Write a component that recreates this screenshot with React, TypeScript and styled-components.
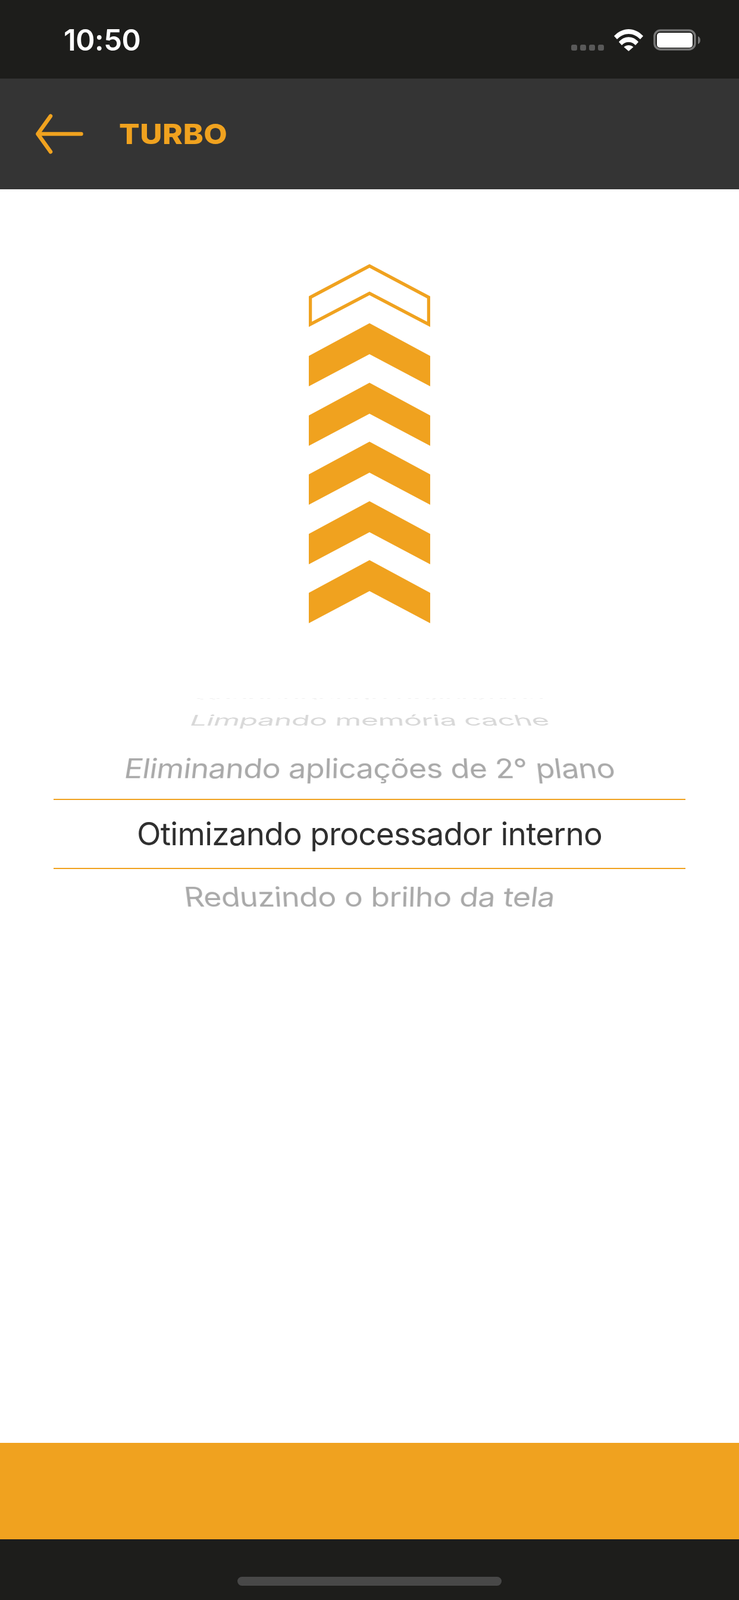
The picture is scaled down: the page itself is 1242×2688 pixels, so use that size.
import React from "react";
import styled, { createGlobalStyle } from "styled-components";

const ORANGE = "#f0a21f";

const Global = createGlobalStyle`
  html, body { margin: 0; padding: 0; background: #fff; }
  #root { width: 1242px; height: 2688px; }
`;

const Screen = styled.div`
  width: 1242px;
  height: 2688px;
  display: flex;
  flex-direction: column;
  overflow: hidden;
  background: #fff;
`;

const StatusBar = styled.div`
  height: 132px;
  flex: none;
  background: #1d1d1b;
  display: flex;
  align-items: flex-start;
  justify-content: space-between;
  box-sizing: border-box;
  padding: 0 62px 0 107px;
`;

const Clock = styled.div`
  font-family: Inter, "Liberation Sans", sans-serif;
  font-weight: 600;
  font-size: 49px;
  line-height: 57px;
  margin-top: 39px;
  color: #fff;
  letter-spacing: -0.5px;
`;

const StatusIcons = styled.svg`
  width: 220px;
  height: 40px;
  margin-top: 48px;
  display: block;
`;

const NavBar = styled.div`
  height: 186px;
  flex: none;
  background: #343434;
  display: flex;
  align-items: center;
  box-sizing: border-box;
  padding-left: 60px;
  gap: 60px;
`;

const BackIcon = styled.svg`
  width: 80px;
  height: 68px;
  display: block;
  flex: none;
`;

const Title = styled.div`
  font-family: Inter, "Liberation Sans", sans-serif;
  font-weight: 800;
  font-size: 46px;
  line-height: 56px;
  color: ${ORANGE};
  letter-spacing: 0.5px;
  transform: scaleX(1.115);
  transform-origin: left center;
`;

const Body = styled.div`
  flex: 1;
  display: flex;
  flex-direction: column;
  align-items: center;
`;

const Chevrons = styled.svg`
  width: 204px;
  height: 603px;
  margin-top: 126px;
  display: block;
  flex: none;
`;

const Picker = styled.div`
  width: 1062px;
  height: 386px;
  margin-top: 121px;
  display: flex;
  flex-direction: column;
  align-items: center;
  perspective: 1200px;
  perspective-origin: 50% 233px;
  overflow: hidden;
  flex: none;
`;

const Row = styled.div<{ $h: number; $angle: number; $color: string; $scale: number }>`
  width: 100%;
  height: ${(p) => p.$h}px;
  flex: none;
  display: flex;
  align-items: center;
  justify-content: center;
  font-family: Inter, "Liberation Sans", sans-serif;
  font-size: 53px;
  letter-spacing: -0.75px;
  white-space: nowrap;
  color: ${(p) => p.$color};
  transform: rotateX(${(p) => p.$angle}deg) scale(${(p) => p.$scale});
`;

const Selected = styled.div`
  width: 100%;
  height: 118px;
  flex: none;
  box-sizing: border-box;
  border-top: 2px solid ${ORANGE};
  border-bottom: 2px solid ${ORANGE};
  display: flex;
  align-items: center;
  justify-content: center;
  font-family: Inter, "Liberation Sans", sans-serif;
  font-size: 53px;
  letter-spacing: -0.75px;
  white-space: nowrap;
  color: #2f2f2f;
`;

const OrangeBar = styled.div`
  height: 162px;
  flex: none;
  background: ${ORANGE};
`;

const HomeArea = styled.div`
  height: 102px;
  flex: none;
  background: #1d1d1b;
  display: flex;
  justify-content: center;
  box-sizing: border-box;
  padding-top: 63px;
`;

const HomeIndicator = styled.div`
  width: 444px;
  height: 15px;
  border-radius: 8px;
  background: #484848;
`;

const chevron = (y: number) =>
  `M0 ${y + 55} L102 ${y} L204 ${y + 55} L204 ${y + 106} L102 ${y + 52} L0 ${y + 106} Z`;

export default function App() {
  return (
    <Screen>
      <Global />
      <StatusBar>
        <Clock>10:50</Clock>
        <StatusIcons viewBox="0 0 220 40">
          <g fill="#595959">
            <rect x="0" y="27" width="10" height="10" rx="3" />
            <rect x="15" y="27" width="10" height="10" rx="3" />
            <rect x="30" y="27" width="10" height="10" rx="3" />
            <rect x="45" y="27" width="10" height="10" rx="3" />
          </g>
          <g fill="#fff">
            <path d="M72 12.5 C86 -3 107 -3 121 12.5 L116 18 C104 6 89 6 77 18 Z" />
            <path d="M80 22.5 C89 11.5 104 11.5 113 22.5 L108 28 C102 21 91 21 85 28 Z" />
            <path d="M88.5 31 C93 27 100 27 104.5 31 L96.5 38 Z" />
          </g>
          <rect x="140" y="3" width="68" height="32" rx="10" fill="none" stroke="#777" strokeWidth="3.5" />
          <rect x="144" y="7" width="60" height="25" rx="5" fill="#fff" />
          <path d="M213 13 C216 14 217 17 217 19.5 C217 22 216 25 213 26 Z" fill="#777" />
        </StatusIcons>
      </StatusBar>
      <NavBar>
        <BackIcon viewBox="0 0 80 68">
          <path
            d="M76.5 34 H3.5 M25 4 L3.5 34 L25 64"
            fill="none"
            stroke={ORANGE}
            strokeWidth="6.5"
            strokeLinecap="round"
            strokeLinejoin="round"
          />
        </BackIcon>
        <Title>TURBO</Title>
      </NavBar>
      <Body>
        <Chevrons viewBox="0 0 204 603">
          <path
            d="M2.5 55.5 L102 2.8 L201.5 55.5 L201.5 100.9 L102 48.8 L2.5 100.9 Z"
            fill="none"
            stroke={ORANGE}
            strokeWidth="5.5"
          />
          <path d={chevron(99)} fill={ORANGE} />
          <path d={chevron(199)} fill={ORANGE} />
          <path d={chevron(298)} fill={ORANGE} />
          <path d={chevron(398)} fill={ORANGE} />
          <path d={chevron(497)} fill={ORANGE} />
        </Chevrons>
        <Picker>
          <Row $h={12} $angle={82} $color="#f0f0f0" $scale={0.95}>Suspendendo aplicativos</Row>
          <Row $h={60} $angle={52} $color="#d8d8d8" $scale={0.95}>Limpando memória cache</Row>
          <Row $h={102} $angle={25} $color="#a9a9a9" $scale={0.985}>Eliminando aplicações de 2° plano</Row>
          <Selected>Otimizando processador interno</Selected>
          <Row $h={94} $angle={-25} $color="#a9a9a9" $scale={0.985}>Reduzindo o brilho da tela</Row>
        </Picker>
      </Body>
      <OrangeBar />
      <HomeArea>
        <HomeIndicator />
      </HomeArea>
    </Screen>
  );
}
